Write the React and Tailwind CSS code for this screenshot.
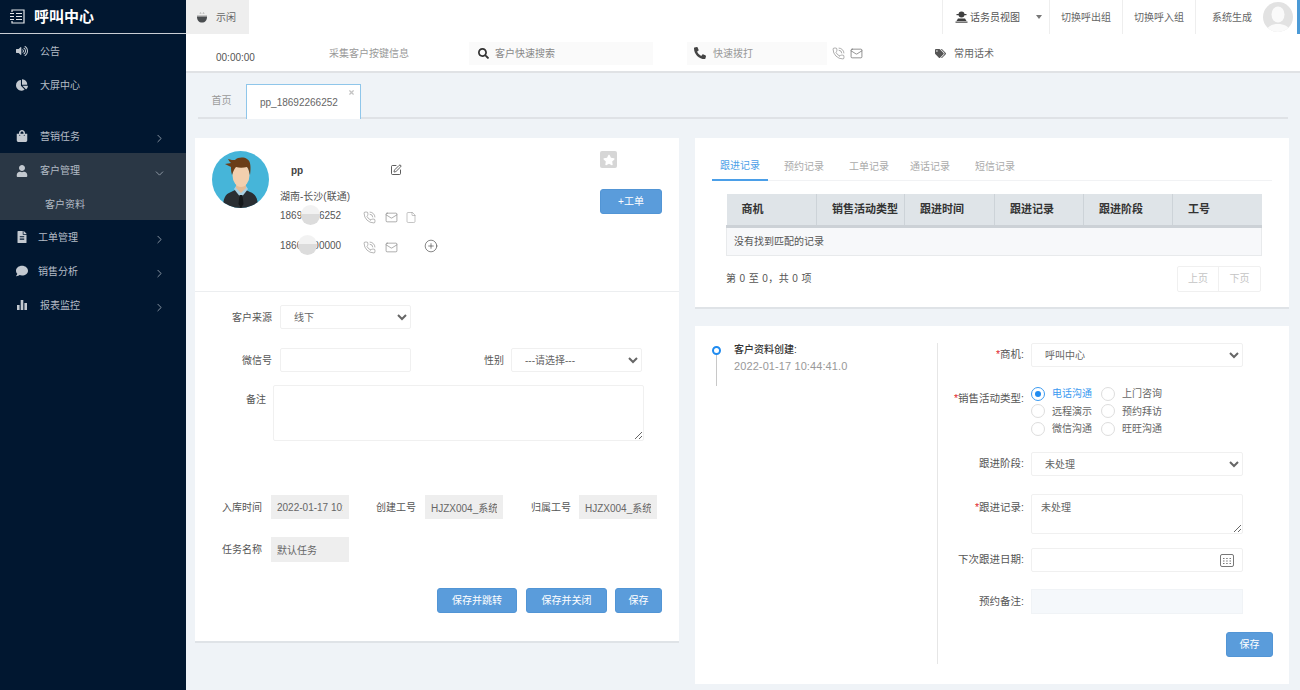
import React from 'react';
import { FaVolumeUp, FaChartPie, FaShoppingBag, FaUser, FaFileAlt, FaComment, FaSearch, FaPhoneAlt, FaTags, FaStar, FaTimes } from 'react-icons/fa';
import { ChevronRight, ChevronDown, PhoneCall, Mail, File, CirclePlus, SquarePen } from 'lucide-react';

const BarsIcon = ({ className }) => (
  <svg viewBox="0 0 12 12" className={className} fill="currentColor">
    <rect x="1" y="6" width="2.600" height="5" />
    <rect x="4.700" y="1" width="2.600" height="10" />
    <rect x="8.400" y="4" width="2.600" height="7" />
  </svg>
);

const menuItems = [
  { label: '工单管理', icon: FaFileAlt, gap: 'ml-[10px]' },
  { label: '销售分析', icon: FaComment, gap: 'ml-[10px]' },
  { label: '报表监控', icon: BarsIcon },
];

const MenuRow = ({ icon: Icon, label, arrow, open, gap = 'ml-[12px]', height = 'h-[34px]' }) => (
  <div className={`flex items-center pl-[16px] text-[10px] text-[#b4bcc6] ${height}`}>
    <Icon className="w-[12px] h-[12px] text-[#c3c9d0]" />
    <span className={gap}>{label}</span>
    {arrow && <ChevronRight className="w-[13px] h-[13px] ml-auto mr-[20px] mt-[5px] text-[#a3acb7]" strokeWidth={1.5} />}
    {open && <ChevronDown className="w-[13px] h-[13px] ml-auto mr-[20px] mt-[5px] text-[#a3acb7]" strokeWidth={1.5} />}
  </div>
);

const Sidebar = () => (
  <div className="w-[186px] shrink-0 h-full bg-[#011730]">
    <div className="h-[34px] flex items-center pl-[9px] border-b border-[#c9ced4]">
      <svg viewBox="0 0 16 15" className="w-[16px] h-[15px]" fill="none" stroke="#e4e7ea" strokeWidth="1.2">
        <path d="M3 3V1h12v13H3v-2" />
        <path d="M1 4.500h4M1 7.500h4M1 10.500h4M7 4.500h6M7 7.500h6M7 10.500h6" />
      </svg>
      <span className="ml-[9px] text-[15px] leading-none font-bold text-white">呼叫中心</span>
    </div>
    <MenuRow icon={FaVolumeUp} label="公告" />
    <MenuRow icon={FaChartPie} label="大屏中心" />
    <div className="h-[17px]" />
    <MenuRow icon={FaShoppingBag} label="营销任务" arrow />
    <div className="bg-[#2a3745]">
      <MenuRow icon={FaUser} label="客户管理" open height="h-[35px]" />
      <div className="h-[32px] flex items-center pl-[45px] text-[10px] text-[#b4bcc6]">客户资料</div>
    </div>
    {menuItems.map((m) => (
      <MenuRow key={m.label} icon={m.icon} label={m.label} gap={m.gap} arrow />
    ))}
  </div>
);

const TopBar = () => (
  <div className="h-[34px] flex bg-white text-[10px] text-[#666]">
    <div className="w-[63px] bg-[#eeeeee] flex items-center pl-[10px]">
      <svg viewBox="0 0 12 12" className="w-[12px] h-[12px] mt-[1px]">
        <path d="M4 1.500c0-1 1-1 1 0M7 1.500c0-1 1-1 1 0" stroke="#999" strokeWidth="0.800" fill="none" />
        <rect x="1" y="3" width="10" height="1.500" fill="#c4c4c4" />
        <path d="M1 4.500h10c0 4-2 6-5 6s-5-2-5-6z" fill="#4a4d50" />
      </svg>
      <span className="ml-[8px] mt-[1px]">示闲</span>
    </div>
    <div className="ml-auto flex items-center h-full">
      <div className="w-[107px] h-full flex items-center pl-[12px] border-l border-[#eeeeee]">
        <svg viewBox="0 0 13 12" className="w-[13px] h-[12px]">
          <circle cx="6.500" cy="3.500" r="3" fill="#3f3f3f" />
          <rect x="1.500" y="3" width="10" height="1.200" fill="#3f3f3f" />
          <path d="M3 7.500h7l1.500 2.500h-10z" fill="#3f3f3f" />
          <rect x="0.500" y="10.500" width="12" height="1.300" fill="#555" />
        </svg>
        <span className="ml-[2px] text-[#555]">话务员视图</span>
        <span className="ml-[16px] w-0 h-0 border-x-[3px] border-t-[4px] border-x-transparent border-t-[#777]" />
      </div>
      <div className="w-[74px] h-full flex items-center justify-center border-x border-[#eeeeee]">切换呼出组</div>
      <div className="w-[73px] h-full flex items-center justify-center border-r border-[#eeeeee]">切换呼入组</div>
      <span className="ml-[16px]">系统生成</span>
      <div className="ml-[11px] w-[30px] h-[30px] rounded-full bg-[#e2e2e2] overflow-hidden flex items-center justify-center">
        <svg viewBox="0 0 30 30" className="w-[30px] h-[30px]">
          <ellipse cx="15" cy="12.500" rx="6.500" ry="8" fill="#fafafa" />
          <path d="M3 30c1-6 6-8 12-8s11 2 12 8z" fill="#fafafa" />
        </svg>
      </div>
      <div className="ml-[4px] w-[3px] h-full bg-[#4b9ad6]" />
    </div>
  </div>
);

const ToolBar = () => (
  <div className="h-[39px] flex items-center bg-white border-b-2 border-[#e0e2e5] text-[10px] text-[#888]">
    <span className="ml-[30px] mt-[9px] text-[#555]">00:00:00</span>
    <span className="ml-[74px] mt-[2px] text-[#999]">采集客户按键信息</span>
    <div className="ml-[60px] w-[184px] h-[23px] mt-[1px] bg-[#fafafa] flex items-center pl-[9px]">
      <FaSearch className="w-[11px] h-[11px] text-[#333]" />
      <span className="ml-[6px]">客户快速搜索</span>
    </div>
    <div className="ml-[34px] w-[140px] h-[23px] mt-[1px] bg-[#fafafa] flex items-center pl-[7px]">
      <FaPhoneAlt className="w-[12px] h-[12px] text-[#444] -scale-x-100 rotate-90" />
      <span className="ml-[7px] text-[#999]">快速拨打</span>
    </div>
    <PhoneCall className="ml-[5px] mt-[1px] w-[13px] h-[13px] text-[#777]" strokeWidth={1.1} />
    <Mail className="ml-[5px] mt-[1px] w-[13px] h-[13px] text-[#666]" strokeWidth={1.3} />
    <FaTags className="ml-[72px] mt-[2px] w-[11px] h-[11px] text-[#555]" />
    <span className="ml-[8px] mt-[2px] text-[#666]">常用话术</span>
  </div>
);

const PageTabs = () => (
  <div className="ml-[12px] mt-[11px] mr-[12px] h-[35px] flex border-b-2 border-[#dfe2e6] text-[10px]">
    <div className="w-[47px] h-[33px] flex items-center justify-center text-[#999]">首页</div>
    <div className="relative ml-[1px] w-[115px] h-[35px] bg-white border border-b-0 border-[#8fc6ea] flex items-center pl-[13px] text-[#666]">
      pp_18692266252
      <FaTimes className="absolute right-[5px] top-[4px] w-[7px] h-[7px] text-[#c4c4c4]" />
    </div>
  </div>
);

// 头像
const Avatar = () => (
  <svg viewBox="0 0 57 57" className="w-[57px] h-[57px] shrink-0">
    <defs>
      <clipPath id="av">
        <circle cx="28.500" cy="28.500" r="28.500" />
      </clipPath>
    </defs>
    <g clipPath="url(#av)">
      <rect width="57" height="57" fill="#46b5d9" />
      <path d="M11 57c0-9 2-14 8-16l6-3h7l6 3c6 2 8 7 8 16z" fill="#2a2e33" />
      <path d="M22 38l7 9 7-9-2-3H24z" fill="#a9cfe2" />
      <path d="M27.500 44h3l1 9-2.500 4-2.500-4z" fill="#15181b" />
      <path d="M24 30h10v7l-5 5-5-5z" fill="#e4bb96" />
      <ellipse cx="29" cy="24" rx="8.500" ry="12" fill="#f2cfae" />
      <path d="M20 24c-1-3-1-6-1-8-2-1-4-2-6-3 2 0 4-1 6-1-1-1-2-2-3-4 3 1 5 1 7 1 3-3 9-3 12-1 4 2 4 9 3 16-1-3-1-6-3-8-4 1-8 1-11 0-2 2-3 5-4 8z" fill="#6b3d17" />
    </g>
  </svg>
);

const ContactIcons = ({ file }) => (
  <>
    <PhoneCall className="absolute left-[83px] top-[3px] w-[13px] h-[13px] text-[#777]" strokeWidth={1} />
    <Mail className="absolute left-[105px] top-[3px] w-[13px] h-[13px] text-[#777]" strokeWidth={1.1} />
    {file && <File className="absolute left-[125px] top-[3px] w-[12px] h-[13px] text-[#888]" strokeWidth={1} />}
  </>
);

const Blob = ({ left }) => (
  <span className={`absolute top-[-3px] w-[19px] h-[20px] rounded-full bg-[linear-gradient(#f2f2f2_45%,#dcdcdc_45%)] ${left}`} />
);

const CustomerHead = () => (
  <div className="relative h-[154px] border-b border-[#eceef0] flex pl-[17px] pt-[13px]">
    <Avatar />
    <div className="ml-[11px] flex-1 text-[10px] text-[#555]">
      <div className="flex items-center h-[16px] mt-[11px]">
        <span className="ml-[11px] font-bold text-[#444]">pp</span>
        <SquarePen className="ml-[87px] w-[12px] h-[12px] text-[#333]" strokeWidth={1.6} />
      </div>
      <div className="mt-[12px] h-[14px] leading-[14px]">湖南-长沙(联通)</div>
      <div className="relative h-[16px] mt-[4px] leading-[16px]">
        18692266252
        <Blob left="left-[21px]" />
        <ContactIcons file />
      </div>
      <div className="relative h-[16px] mt-[14px] leading-[16px]">
        18600000000
        <Blob left="left-[18px]" />
        <ContactIcons />
        <CirclePlus className="absolute left-[144px] top-[1px] w-[14px] h-[14px] text-[#444]" strokeWidth={1.1} />
      </div>
    </div>
    <div className="flex flex-col items-start mr-[17px]">
      <div className="w-[17px] h-[17px] bg-[#d6d6d6] rounded-[2px] flex items-center justify-center">
        <FaStar className="w-[12px] h-[12px] text-white" />
      </div>
      <BlueButton className="mt-[21px] w-[62px] h-[24px]">+工单</BlueButton>
    </div>
  </div>
);

const BlueButton = ({ children, className = '' }) => (
  <button className={`h-[25px] rounded-[3px] bg-[#5a9cdb] border border-[#5295d5] text-white text-[10px] ${className}`}>{children}</button>
);

const boxCls = 'h-[24px] bg-white border border-[#f0f0f0] text-[10px] text-[#666] rounded-[2px] outline-none';

const CustomerForm = () => (
  <div className="pt-[13px] text-[10px] text-[#555]">
    <div className="flex items-center">
      <span className="w-[77px] text-right">客户来源</span>
      <select className={`ml-[8px] w-[131px] px-[9px] ${boxCls}`} defaultValue="线下">
        <option>线下</option>
      </select>
    </div>
    <div className="flex items-center mt-[19px]">
      <span className="w-[77px] text-right">微信号</span>
      <input className={`ml-[8px] w-[131px] ${boxCls}`} />
      <span className="ml-[73px] w-[20px] text-right">性别</span>
      <select className={`ml-[7px] w-[131px] px-[9px] ${boxCls}`} defaultValue="---请选择---">
        <option>---请选择---</option>
      </select>
    </div>
    <div className="flex mt-[13px]">
      <span className="w-[71px] text-right mt-[7px]">备注</span>
      <textarea className="ml-[7px] w-[371px] h-[56px] bg-white border border-[#f0f0f0] rounded-[2px] outline-none" />
    </div>
    <div className="flex items-center mt-[54px]">
      <span className="w-[67px] text-right">入库时间</span>
      <ReadOnly className="ml-[9px]" value="2022-01-17 10:44:41" />
      <span className="ml-[27px] w-[40px]">创建工号</span>
      <ReadOnly className="ml-[9px]" value="HJZX004_系统生成" />
      <span className="ml-[28px] w-[40px]">归属工号</span>
      <ReadOnly className="ml-[8px]" value="HJZX004_系统生成" />
    </div>
    <div className="flex items-center mt-[18px]">
      <span className="w-[67px] text-right">任务名称</span>
      <ReadOnly className="ml-[9px] h-[25px]" value="默认任务" />
    </div>
    <div className="flex justify-end mt-[26px] mr-[17px] gap-[8px]">
      <BlueButton className="w-[80px] mr-[1px]">保存并跳转</BlueButton>
      <BlueButton className="w-[81px]">保存并关闭</BlueButton>
      <BlueButton className="w-[47px]">保存</BlueButton>
    </div>
  </div>
);

const ReadOnly = ({ value, className = '' }) => (
  <input readOnly value={value} className={`w-[78px] h-[24px] bg-[#eeeeee] px-[6px] text-[10px] text-[#666] outline-none ${className}`} />
);

const columns = [
  { name: '商机', w: 'w-[90px]' },
  { name: '销售活动类型', w: 'w-[88px]' },
  { name: '跟进时间', w: 'w-[90px]' },
  { name: '跟进记录', w: 'w-[89px]' },
  { name: '跟进阶段', w: 'w-[89px]' },
  { name: '工号', w: 'w-[89px]' },
];

const RecordCard = () => (
  <div className="h-[171px] bg-white border-b-2 border-[#dfe3e7] pt-[12px]">
    <div className="ml-[17px] w-[560px] h-[31px] flex border-b border-[#f1f2f4] text-[10px] text-[#aaa]">
      <div className="w-[56px] h-[31px] pt-[2px] flex items-center justify-center text-[#4b9fe8] border-b-2 border-[#4b9fe8]">跟进记录</div>
      <div className="ml-[16px] flex h-[31px] pt-[2px] items-center">
        <span>预约记录</span>
        <span className="ml-[25px]">工单记录</span>
        <span className="ml-[21px]">通话记录</span>
        <span className="ml-[25px]">短信记录</span>
      </div>
    </div>
    <table className="ml-[31px] mt-[13px] w-[535px] table-fixed border-collapse text-[10px]">
      <thead>
        <tr className="h-[32px] bg-[#dfe4e8] border-b-[3px] border-[#ccd1d6]">
          {columns.map((c) => (
            <th key={c.name} className={`${c.w} pl-[15px] text-left text-[11px] font-bold text-[#333] border-r border-[#cdd3d8] last:border-r-0`}>
              {c.name}
            </th>
          ))}
        </tr>
      </thead>
      <tbody>
        <tr className="h-[29px] bg-[#f7f8fa] border border-[#e8eaec] border-t-0">
          <td colSpan={6} className="pl-[7px] text-[#555]">没有找到匹配的记录</td>
        </tr>
      </tbody>
    </table>
    <div className="ml-[31px] w-[535px] mt-[10px] flex items-center justify-between text-[10px] text-[#555]">
      <span className="tracking-[0.4px]">第 0 至 0，共 0 项</span>
      <div className="flex h-[26px] border border-[#f0f0f0] text-[#c4c4c4] rounded-[2px]">
        <span className="w-[41px] flex items-center justify-center border-r border-[#f0f0f0]">上页</span>
        <span className="w-[41px] flex items-center justify-center">下页</span>
      </div>
    </div>
  </div>
);

const Req = () => <span className="text-[#e0242c]">*</span>;

const FormRow = ({ label, req, className = '', top, children }) => (
  <div className={`flex ${top ? 'items-start' : 'items-center'} ${className}`}>
    <span className={`w-[86px] text-right text-[10.500px] whitespace-nowrap ${top ? 'mt-[6px]' : ''}`}>
      {req && <Req />}
      {label}:
    </span>
    <div className="ml-[7px] w-[212px]">{children}</div>
  </div>
);

const Radio = ({ label, checked }) => (
  <div className={`flex items-center h-[17.500px] ${checked ? 'text-[#3b9af0]' : 'text-[#666]'}`}>
    <span className={`w-[14px] h-[14px] rounded-full border flex items-center justify-center bg-white ${checked ? 'border-[#3b9af0]' : 'border-[#dddddd]'}`}>
      {checked && <span className="w-[6px] h-[6px] rounded-full bg-[#1f8bf0]" />}
    </span>
    <span className="ml-[7px]">{label}</span>
  </div>
);

const FollowCard = () => (
  <div className="mt-[17px] h-[358px] bg-white pt-[17px] flex text-[10px] text-[#555]">
    <div className="w-[242px] flex pl-[17px]">
      <div className="flex flex-col items-center w-[9px]">
        <span className="mt-[3px] w-[9px] h-[9px] rounded-full border-2 border-[#1f8bf0] bg-white" />
        <span className="w-px h-[31px] bg-[#c8c8c8]" />
      </div>
      <div className="ml-[13px]">
        <div className="font-medium text-[#333] leading-[14px]">客户资料创建:</div>
        <div className="mt-[2px] text-[11px] tracking-[0.1px] leading-[14px] text-[#999]">2022-01-17 10:44:41.0</div>
      </div>
    </div>
    <div className="w-[336px] h-[321px] border-l border-[#e6e6e6] flex flex-col">
      <FormRow label="商机" req>
        <select className={`w-full px-[9px] ${boxCls}`} defaultValue="呼叫中心">
          <option>呼叫中心</option>
        </select>
      </FormRow>
      <FormRow label="销售活动类型" req top className="mt-[18px]">
        <div className="grid grid-cols-[70px_70px] w-[140px]">
          <Radio label="电话沟通" checked />
          <Radio label="上门咨询" />
          <Radio label="远程演示" />
          <Radio label="预约拜访" />
          <Radio label="微信沟通" />
          <Radio label="旺旺沟通" />
        </div>
      </FormRow>
      <FormRow label="跟进阶段" className="mt-[14.500px]">
        <select className={`w-full px-[9px] ${boxCls}`} defaultValue="未处理">
          <option>未处理</option>
        </select>
      </FormRow>
      <FormRow label="跟进记录" req top className="mt-[18px]">
        <textarea defaultValue="未处理" className="block w-full h-[40px] px-[9px] py-[5px] bg-white border border-[#f0f0f0] rounded-[2px] text-[10px] text-[#666] outline-none" />
      </FormRow>
      <FormRow label="下次跟进日期" className="mt-[14px]">
        <div className={`flex items-center justify-end pr-[8px] ${boxCls}`}>
          <svg viewBox="0 0 14 14" className="w-[14px] h-[14px]" fill="none" stroke="#777" strokeWidth="1">
            <rect x="0.500" y="1.500" width="13" height="12" rx="1.500" />
            <path d="M3 5.500h1.500M6.200 5.500h1.500M9.500 5.500h1.500M3 8h1.500M6.200 8h1.500M9.500 8h1.500M3 10.500h1.500M6.200 10.500h1.500M9.500 10.500h1.500" />
          </svg>
        </div>
      </FormRow>
      <FormRow label="预约备注" className="mt-[17px]">
        <div className="h-[25px] bg-[#f5f8fb] border border-[#f0f3f6]" />
      </FormRow>
      <div className="flex justify-end mt-[18px]">
        <BlueButton className="w-[47px]">保存</BlueButton>
      </div>
    </div>
  </div>
);

export default function App() {
  return (
    <div className="w-[1300px] h-[690px] overflow-hidden flex bg-[#eff3f7] [font-family:'Liberation_Sans','Noto_Sans_CJK_SC',sans-serif]">
      <Sidebar />
      <div className="flex-1 min-w-0">
        <TopBar />
        <ToolBar />
        <PageTabs />
        <div className="flex mt-[19px] ml-[9px]">
          <div className="w-[484px] h-[505px] bg-white border-b-2 border-[#dfe3e7]">
            <CustomerHead />
            <CustomerForm />
          </div>
          <div className="ml-[16px] w-[594px]">
            <RecordCard />
            <FollowCard />
          </div>
        </div>
      </div>
    </div>
  );
}
